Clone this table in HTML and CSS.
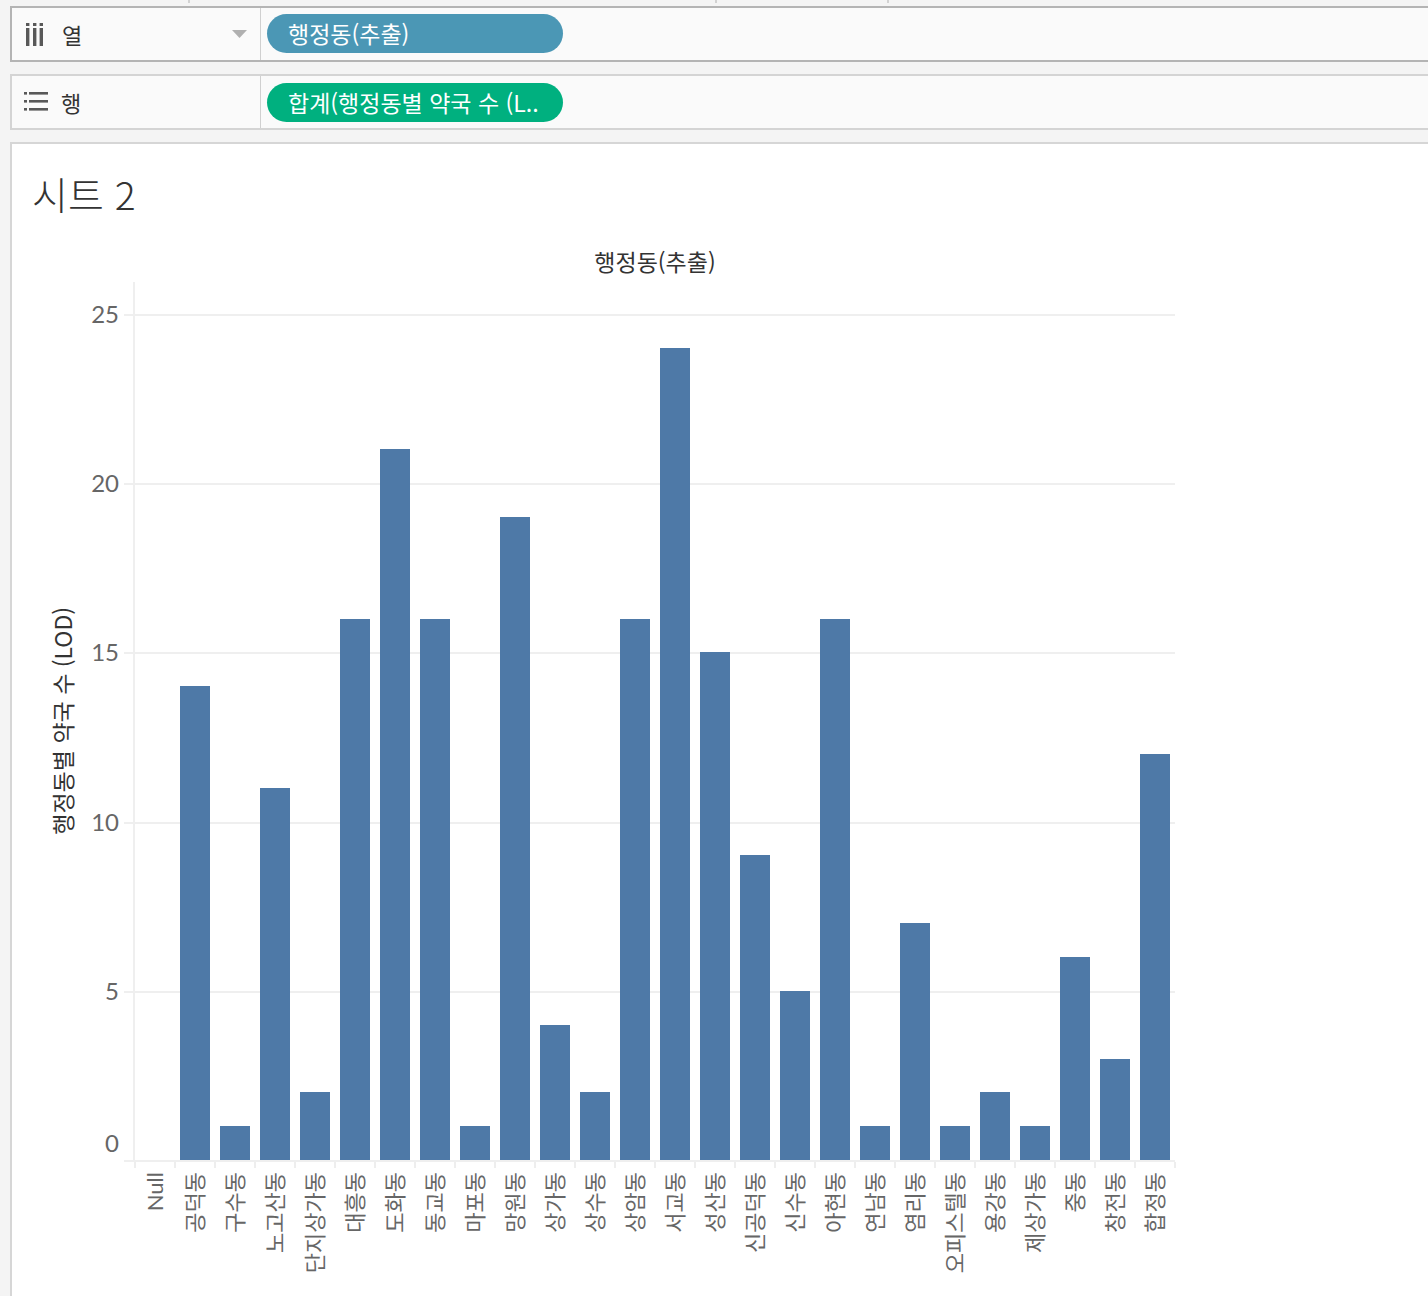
FILE: index.html
```html
<!DOCTYPE html>
<html lang="ko">
<head>
<meta charset="utf-8">
<link rel="stylesheet" href="styles.css">
</head>
<body>
<div class="topstrip"><span class="tk t1"></span><span class="tk t2"></span><span class="tk t3"></span></div>

<div class="shelf cols">
  <div class="lbl">
    <svg class="ico" width="19" height="23" viewBox="0 0 19 23"><g fill="#585858"><rect x="1" y="0" width="3.4" height="3"/><rect x="1" y="5" width="3.4" height="18"/><rect x="8" y="0" width="3.4" height="3"/><rect x="8" y="5" width="3.4" height="18"/><rect x="14.6" y="0" width="3.4" height="3"/><rect x="14.6" y="5" width="3.4" height="18"/></g></svg>
    <span class="lbltext">열</span>
    <svg class="dd" width="15" height="8" viewBox="0 0 15 8"><path d="M0 0H15L7.5 8Z" fill="#b0b0b0"/></svg>
  </div>
  <div class="pill blue">행정동(추출)</div>
</div>

<div class="shelf rows">
  <div class="lbl">
    <svg class="ico2" width="24" height="20" viewBox="0 0 24 20"><g fill="#585858"><rect x="0" y="0" width="3" height="2.6"/><rect x="5" y="0" width="19" height="2.6"/><rect x="0" y="8" width="3" height="2.6"/><rect x="5" y="8" width="19" height="2.6"/><rect x="0" y="16" width="3" height="2.6"/><rect x="5" y="16" width="19" height="2.6"/></g></svg>
    <span class="lbltext">행</span>
  </div>
  <div class="pill green">합계(행정동별 약국 수 (L..</div>
</div>

<div class="panel">
  <div class="title">시트 2</div>
  <div class="chart">
    <div class="ytitle-col"><span class="ytitle">행정동별 약국 수 (LOD)</span></div>
    <div class="ticks-col">
      <div class="yt"><span>25</span></div>
      <div class="yt"><span>20</span></div>
      <div class="yt"><span>15</span></div>
      <div class="yt"><span>10</span></div>
      <div class="yt"><span>5</span></div>
      <div class="yt last"><span>0</span></div>
    </div>
    <div class="main">
      <div class="header">행정동(추출)</div>
      <div class="plot">
        <div class="grid">
          <div class="gl"></div><div class="gl"></div><div class="gl"></div><div class="gl"></div><div class="gl"></div>
        </div>
        <div class="area">
          <div class="col"><div class="bar" style="height:0px"></div></div>
          <div class="col"><div class="bar" style="height:473.8px"></div></div>
          <div class="col"><div class="bar" style="height:33.84px"></div></div>
          <div class="col"><div class="bar" style="height:372.2px"></div></div>
          <div class="col"><div class="bar" style="height:67.7px"></div></div>
          <div class="col"><div class="bar" style="height:541.4px"></div></div>
          <div class="col"><div class="bar" style="height:710.6px"></div></div>
          <div class="col"><div class="bar" style="height:541.4px"></div></div>
          <div class="col"><div class="bar" style="height:33.84px"></div></div>
          <div class="col"><div class="bar" style="height:643px"></div></div>
          <div class="col"><div class="bar" style="height:135.4px"></div></div>
          <div class="col"><div class="bar" style="height:67.7px"></div></div>
          <div class="col"><div class="bar" style="height:541.4px"></div></div>
          <div class="col"><div class="bar" style="height:812.2px"></div></div>
          <div class="col"><div class="bar" style="height:507.6px"></div></div>
          <div class="col"><div class="bar" style="height:304.6px"></div></div>
          <div class="col"><div class="bar" style="height:169.2px"></div></div>
          <div class="col"><div class="bar" style="height:541.4px"></div></div>
          <div class="col"><div class="bar" style="height:33.84px"></div></div>
          <div class="col"><div class="bar" style="height:236.9px"></div></div>
          <div class="col"><div class="bar" style="height:33.84px"></div></div>
          <div class="col"><div class="bar" style="height:67.7px"></div></div>
          <div class="col"><div class="bar" style="height:33.84px"></div></div>
          <div class="col"><div class="bar" style="height:203px"></div></div>
          <div class="col"><div class="bar" style="height:101.5px"></div></div>
          <div class="col"><div class="bar" style="height:406.1px"></div></div>
        </div>
      </div>
      <div class="axisline"></div>
      <div class="xticks"></div>
      <div class="xlabels">
        <div class="xc"><span class="xl">Null</span></div>
        <div class="xc"><span class="xl">공덕동</span></div>
        <div class="xc"><span class="xl">구수동</span></div>
        <div class="xc"><span class="xl">노고산동</span></div>
        <div class="xc"><span class="xl">단지상가동</span></div>
        <div class="xc"><span class="xl">대흥동</span></div>
        <div class="xc"><span class="xl">도화동</span></div>
        <div class="xc"><span class="xl">동교동</span></div>
        <div class="xc"><span class="xl">마포동</span></div>
        <div class="xc"><span class="xl">망원동</span></div>
        <div class="xc"><span class="xl">상가동</span></div>
        <div class="xc"><span class="xl">상수동</span></div>
        <div class="xc"><span class="xl">상암동</span></div>
        <div class="xc"><span class="xl">서교동</span></div>
        <div class="xc"><span class="xl">성산동</span></div>
        <div class="xc"><span class="xl">신공덕동</span></div>
        <div class="xc"><span class="xl">신수동</span></div>
        <div class="xc"><span class="xl">아현동</span></div>
        <div class="xc"><span class="xl">연남동</span></div>
        <div class="xc"><span class="xl">염리동</span></div>
        <div class="xc"><span class="xl">오피스텔동</span></div>
        <div class="xc"><span class="xl">용강동</span></div>
        <div class="xc"><span class="xl">제상가동</span></div>
        <div class="xc"><span class="xl">중동</span></div>
        <div class="xc"><span class="xl">창전동</span></div>
        <div class="xc"><span class="xl">합정동</span></div>
      </div>
    </div>
  </div>
</div>
</body>
</html>
```

FILE: styles.css
```css
* { box-sizing: border-box; }
html, body { margin: 0; padding: 0; }
body {
  background: #f4f4f4;
  font-family: "Lato", "Noto Sans CJK KR", sans-serif;
  width: 1428px;
  height: 1296px;
  overflow: hidden;
}

.topstrip { height: 6px; display: flex; align-items: flex-start; }
.tk { width: 2px; height: 3px; background: #d2d2d2; }
.t1 { margin-left: 188px; }
.t2 { margin-left: 525px; }
.t3 { margin-left: 170px; }

.shelf {
  margin-left: 10px;
  height: 56px;
  display: flex;
  align-items: stretch;
  background: #fafafa;
  border-top: 2px solid #b4b4b4;
  border-bottom: 2px solid #b4b4b4;
  border-left: 2px solid #b4b4b4;
}
.shelf.rows {
  margin-top: 12px;
  border-color: #d4d4d4;
}
.lbl {
  width: 249px;
  flex: none;
  display: flex;
  align-items: center;
  padding-left: 13px;
  border-right: 1px solid #d0d0d0;
}
.ico2 { margin-left: -1px; }
.lbltext {
  font-family: "Noto Sans CJK KR", sans-serif;
  font-size: 22px;
  color: #333;
  margin-left: 18px;
}
.rows .lbltext { margin-left: 13px; }
.dd { margin-left: auto; margin-right: 13px; }

.pill {
  align-self: center;
  margin-left: 6px;
  width: 296px;
  height: 39px;
  border-radius: 20px;
  padding-left: 21px;
  color: #fff;
  font-family: "Noto Sans CJK KR", sans-serif;
  font-size: 23px;
  line-height: 38px;
  white-space: nowrap;
}
.cols .pill { margin-top: -1px; }
.pill.blue { background: #4b97b5; }
.pill.green { background: #00b07f; }

.panel {
  margin: 12px 0 0 10px;
  height: 1160px;
  background: #fff;
  border-top: 2px solid #d6d6d6;
  border-left: 2px solid #d6d6d6;
  padding-top: 27px;
}
.title {
  font-family: "Noto Sans CJK KR", sans-serif;
  font-size: 39px;
  font-weight: 300;
  line-height: 44px;
  color: #333;
  padding-left: 20px;
}

.chart {
  margin-top: 31px;
  display: flex;
  align-items: flex-start;
  padding-left: 30px;
}
.ytitle-col {
  width: 40px;
  height: 878px;
  margin-top: 36px;
  display: flex;
  align-items: center;
  justify-content: center;
}
.ytitle {
  writing-mode: vertical-rl;
  text-orientation: sideways;
  transform: rotate(180deg);
  font-family: "Noto Sans CJK KR", sans-serif;
  font-size: 23px;
  line-height: 26px;
  color: #333;
  white-space: nowrap;
}
.ticks-col {
  width: 42px;
  height: 878px;
  margin-top: 36px;
  padding-top: 32px;
  display: flex;
  flex-direction: column;
}
.yt { height: 169.2px; flex: none; }
.yt.last { height: 0; }
.yt span {
  display: block;
  margin-top: -13px;
  line-height: 26px;
  text-align: right;
  padding-right: 5px;
  font-family: "Lato", sans-serif;
  font-size: 24px;
  color: #666;
}
.yt.last span { margin-top: -30px; }

.main { width: 1051px; display: flex; flex-direction: column; }
.header {
  height: 36px;
  padding-left: 11px;
  text-align: center;
  font-family: "Noto Sans CJK KR", sans-serif;
  font-size: 23px;
  line-height: 30px;
  color: #333;
}
.plot {
  position: relative;
  height: 878px;
  padding-left: 10px;
}
.grid {
  position: absolute;
  inset: 0;
  padding-top: 32px;
  display: flex;
  flex-direction: column;
}
.gl { height: 169.2px; flex: none; border-top: 2px solid #efefef; }
.area {
  position: relative;
  height: 100%;
  border-left: 2px solid #efefef;
  margin-left: -1px;
  display: flex;
  align-items: flex-end;
}
.col {
  width: 40px;
  flex: none;
  height: 100%;
  display: flex;
  align-items: flex-end;
  justify-content: center;
}
.bar { width: 30px; background: #4e79a7; }

.axisline { height: 2px; background: #efefef; }
.xticks {
  height: 6px;
  margin-left: 10px;
  background: repeating-linear-gradient(to right, #eeeeee 0 2px, transparent 2px 40px);
  width: 1043px;
}
.xlabels {
  display: flex;
  margin-left: 11px;
  padding-top: 4px;
}
.xc {
  width: 40px;
  flex: none;
  display: flex;
  justify-content: center;
  align-items: flex-start;
}
.xl {
  writing-mode: vertical-rl;
  text-orientation: sideways;
  transform: rotate(180deg);
  font-family: "Lato", "Noto Sans CJK KR", sans-serif;
  font-size: 22px;
  line-height: 24px;
  color: #666;
  white-space: nowrap;
}
```
